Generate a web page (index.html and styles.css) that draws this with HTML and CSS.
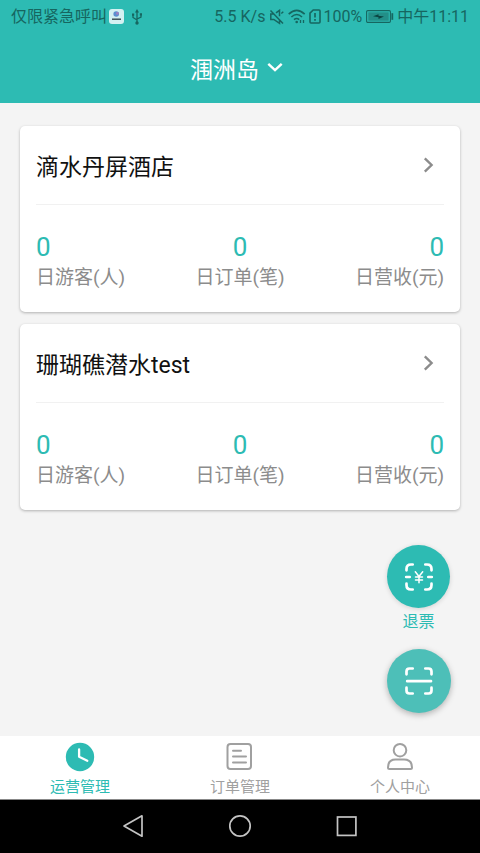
FILE: index.html
```html
<!DOCTYPE html>
<html lang="zh-CN">
<head>
<meta charset="utf-8">
<meta name="viewport" content="width=device-width, initial-scale=1">
<title>运营管理</title>
<link rel="stylesheet" href="styles.css">
</head>
<body>
<div class="app">
  <header class="header">
    <div class="status">
      <span class="carrier">仅限紧急呼叫</span>
      <svg class="ic-app" width="15" height="15" viewBox="0 0 15 15"><rect width="15" height="15" rx="3" fill="#d3f1f2"/><circle cx="7.2" cy="5" r="2.8" fill="#5a8fd0"/><circle cx="8.4" cy="4.4" r="1.4" fill="#a07fc0"/><path d="M3 10.200h9" stroke="#34474c" stroke-width="1.400"/></svg>
      <svg class="ic-usb" width="12" height="16" viewBox="0 0 12 16" fill="none" stroke="#166660" stroke-width="1.300"><path d="M6 3v10M2 6v2.500L6 11M10 5.500V8L6 10"/><path d="M6 0l2 3.400H4zM1 4.500h2.200v2.200H1zM8.800 4.300H11v2.200H8.800z" fill="#166660" stroke="none"/><circle cx="6" cy="14" r="1.700" fill="#166660" stroke="none"/></svg>
      <span class="speed">5.5 K/s</span>
      <svg class="ic-mute" width="16" height="16" viewBox="0 0 16 16" fill="none" stroke="#166660" stroke-width="1.500"><path d="M1.500 1.500l12.500 13M4.500 5H1.800v5.500h3l5.700 3.800V11M7 3.800L10.500 1.300v6M12.300 4.500l2-1.700"/></svg>
      <svg class="ic-wifi" width="18" height="15" viewBox="0 0 18 15" fill="none" stroke="#166660" stroke-width="1.600"><path d="M.7 5.200Q8.700-2.400 16.700 5.200M3.400 8Q8.700 3 14 8M6 10.700q2.700-2.400 5.200 0"/><circle cx="8.700" cy="13" r="1.300" fill="#166660" stroke="none"/><path d="M12.500 11v3M15.500 11v3" stroke-width="1.300"/></svg>
      <svg class="ic-sim" width="12" height="15" viewBox="0 0 12 15" fill="none" stroke="#166660" stroke-width="1.600"><path d="M4.200 1H10q1 0 1 1v11q0 1-1 1H2q-1 0-1-1V4.200z"/><path d="M6 4v4.500M6 10v1.800" stroke-width="1.700"/></svg>
      <span class="percent">100%</span>
      <svg class="ic-bat" width="28" height="13" viewBox="0 0 28 13"><rect x=".6" y=".6" width="23.800" height="11.800" rx="1.200" fill="none" stroke="#166660" stroke-width="1.100"/><rect x="2.300" y="2.300" width="20.400" height="8.400" fill="#238f88"/><path d="M7 6.200l5.500-2v1.600l5.500.7-5.500 2.500V7.200z" fill="#0b4542"/><path d="M26.300 3.200v6.600" stroke="#166660" stroke-width="1.800"/></svg>
      <span class="clock">中午11:11</span>
    </div>
    <div class="place"><span>涠洲岛</span><svg width="16" height="11" viewBox="0 0 16 11" fill="none" stroke="#fff" stroke-width="2.400"><path d="M1.300 1.800L8 8.200l6.700-6.400"/></svg></div>
  </header>

  <main class="content">
    <section class="card">
      <div class="card-head"><h2>滴水丹屏酒店</h2><svg width="11" height="16" viewBox="0 0 11 16" fill="none" stroke="#8c8c8c" stroke-width="2.400"><path d="M1.800 1.300L8.600 8l-6.800 6.700"/></svg></div>
      <div class="stats">
        <div class="stat"><b>0</b><span>日游客(人)</span></div>
        <div class="stat"><b>0</b><span>日订单(笔)</span></div>
        <div class="stat"><b>0</b><span>日营收(元)</span></div>
      </div>
    </section>
    <section class="card">
      <div class="card-head"><h2>珊瑚礁潜水test</h2><svg width="11" height="16" viewBox="0 0 11 16" fill="none" stroke="#8c8c8c" stroke-width="2.400"><path d="M1.800 1.300L8.600 8l-6.800 6.700"/></svg></div>
      <div class="stats">
        <div class="stat"><b>0</b><span>日游客(人)</span></div>
        <div class="stat"><b>0</b><span>日订单(笔)</span></div>
        <div class="stat"><b>0</b><span>日营收(元)</span></div>
      </div>
    </section>
    <div class="actions">
      <button class="fab refund" aria-label="退票"><svg width="30" height="30" viewBox="0 0 30 30" fill="none" stroke="#fff" stroke-width="2.700" stroke-linecap="round"><path d="M2.500 8.300V7q0-4.500 4.500-4.500h1.700M21.300 2.500H23q4.500 0 4.500 4.500v1.300M27.500 21.700V23q0 4.500-4.500 4.500h-1.700M8.700 27.500H7q-4.500 0-4.500-4.500v-1.300M2.200 15h3.500M24.300 15h3.500"/><path d="M11.300 9.800L15 14.500l3.700-4.700M15 14.500v6.300M11.500 15h7M11.500 18h7" stroke-width="1.500"/></svg></button>
      <span class="fab-label">退票</span>
      <button class="fab scan" aria-label="扫码"><svg width="30" height="30" viewBox="0 0 30 30" fill="none" stroke="#fff" stroke-width="2.700" stroke-linecap="round"><path d="M2.500 8.300V5.500q0-3 3-3h3.200M21.300 2.500h3.200q3 0 3 3v2.800M27.500 21.700v2.800q0 3-3 3h-3.200M8.700 27.500H5.500q-3 0-3-3v-2.800M3.200 15.200h23.800"/></svg></button>
    </div>
  </main>

  <nav class="tabs">
    <a class="tab active"><svg width="30" height="30" viewBox="0 0 30 30"><circle cx="15" cy="15" r="14.200" fill="#2dbbb3"/><path d="M14.100 7.500v7.300l8.200 4" fill="none" stroke="#fff" stroke-width="2.300" stroke-linecap="round" stroke-linejoin="round"/></svg><span>运营管理</span></a>
    <a class="tab"><svg width="30" height="30" viewBox="0 0 30 30" fill="none" stroke="#a0a0a0" stroke-width="2"><rect x="2.500" y="2" width="23.500" height="25" rx="3"/><path d="M8 8.800h8M8 14.500h13M8 20.500h13" stroke-linecap="round"/></svg><span>订单管理</span></a>
    <a class="tab"><svg width="30" height="30" viewBox="0 0 30 30" fill="none" stroke="#a0a0a0" stroke-width="2"><circle cx="15" cy="8.200" r="6.300"/><path d="M10.500 17.500h8.500q8 0 8 8 0 1.500-1.500 1.500h-21Q3 27 3 25.500q0-8 7.500-8z"/></svg><span>个人中心</span></a>
  </nav>

  <div class="sysnav">
    <svg width="22" height="24" viewBox="0 0 22 24"><path d="M20 1.800v20.400L2 12z" stroke-linejoin="round"/></svg>
    <svg width="24" height="24" viewBox="0 0 24 24"><circle cx="12" cy="12" r="10.200"/></svg>
    <svg width="22" height="24" viewBox="0 0 22 24"><rect x="1.500" y="3" width="18.400" height="18.400"/></svg>
  </div>
</div>
</body>
</html>
```
FILE: styles.css
```css
* { box-sizing: border-box; }
body {
  margin: 0;
  background: #f4f4f4;
  font-family: Roboto, "Noto Sans CJK SC", sans-serif;
  color: #111;
}
svg { display: block; flex: none; }
.app {
  width: 480px;
  height: 853px;
  display: flex;
  flex-direction: column;
  overflow: hidden;
}
.header {
  height: 103px;
  background: #2dbbb3;
}
.status {
  height: 33px;
  padding: 0 11px;
  display: flex;
  align-items: center;
  font-size: 16px;
  line-height: 33px;
  color: #166660;
  white-space: nowrap;
}
.ic-app { margin-left: 2px; }
.ic-usb { margin-left: 7px; }
.speed { margin-left: auto; }
.ic-mute { margin-left: 4px; }
.ic-wifi { margin-left: 3px; }
.ic-sim { margin-left: 3px; }
.percent { margin-left: 2px; }
.ic-bat { margin-left: 4px; }
.clock { margin-left: 3px; }
.place {
  height: 69px;
  padding-left: 190px;
  display: flex;
  align-items: center;
  gap: 8px;
  font-size: 23px;
  color: #fff;
}
.content {
  position: relative;
  flex: 1;
  padding: 23px 20px 0;
}
.card {
  height: 186px;
  margin-bottom: 12px;
  padding: 0 16px;
  background: #fff;
  border-radius: 5px;
  box-shadow: 0 1px 3px rgba(0, 0, 0, .28);
}
.card-head {
  height: 79px;
  padding-right: 10px;
  display: flex;
  align-items: center;
  justify-content: space-between;
  border-bottom: 1px solid #f1f1f1;
}
.card-head h2 {
  margin: 0;
  font-size: 23px;
  font-weight: 400;
}
.stats {
  padding-top: 27px;
  display: flex;
  justify-content: space-between;
}
.stat {
  display: flex;
  flex-direction: column;
  align-items: center;
}
.stat:first-child { align-items: flex-start; }
.stat:last-child { align-items: flex-end; }
.stat b {
  font-size: 26px;
  line-height: 31px;
  font-weight: 400;
  color: #2dbbb3;
}
.stat span {
  font-size: 19px;
  line-height: 30px;
  color: #8c8c8c;
}
.actions {
  position: absolute;
  right: 29px;
  bottom: 23px;
  width: 65px;
  display: flex;
  flex-direction: column;
  align-items: center;
}
.fab {
  width: 63px;
  height: 63px;
  padding: 0;
  border: 0;
  border-radius: 50%;
  display: flex;
  align-items: center;
  justify-content: center;
  background: #2dbbb3;
  box-shadow: 0 1px 5px rgba(0, 0, 0, .14);
}
.fab-label {
  margin-bottom: 13px;
  font-size: 16px;
  line-height: 28px;
  color: #2dbbb3;
}
.scan {
  width: 64px;
  height: 64px;
  background: #4dbfb8;
  box-shadow: 0 2px 6px rgba(0, 0, 0, .28);
}
.tabs {
  height: 64px;
  display: flex;
  background: #fff;
  border-bottom: 1px solid #888;
}
.tab {
  flex: 1;
  padding-top: 6px;
  display: flex;
  flex-direction: column;
  align-items: center;
  font-size: 15px;
  line-height: 31px;
  color: #a0a0a0;
}
.active { color: #2dbbb3; }
.sysnav {
  height: 53px;
  padding-bottom: 2px;
  display: flex;
  align-items: center;
  justify-content: center;
  gap: 84px;
  background: #000;
  fill: none;
  stroke: #c4c4c4;
  stroke-width: 1.700;
}
```
